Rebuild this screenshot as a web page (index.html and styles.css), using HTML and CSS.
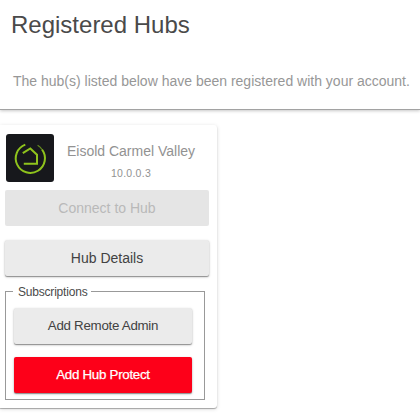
FILE: index.html
```html
<!DOCTYPE html>
<html lang="en">
<head>
<meta charset="utf-8">
<title>Registered Hubs</title>
<link rel="stylesheet" href="styles.css">
</head>
<body>
<header class="intro">
  <h1>Registered Hubs</h1>
  <p>The hub(s) listed below have been registered with your account.</p>
</header>
<main class="card">
  <div class="hub">
    <svg class="logo" viewBox="0 0 48 48" width="48" height="48">
      <rect width="48" height="48" rx="3" fill="#17181c"/>
      <g fill="none" stroke="#8fc31c" stroke-width="2">
        <path d="M19.3 10.6A14.6 14.6 0 1 0 36 15.5"/>
        <path d="M36 15.5Q34.4 12.8 31.6 11.2" stroke-width="1.3" stroke="#648a20"/>
        <path d="M16.8 19.2L24.3 14.5L31 20.8V29.7H17.8"/>
      </g>
    </svg>
    <div class="info">
      <div class="name">Eisold Carmel Valley</div>
      <div class="ip">10.0.0.3</div>
    </div>
  </div>
  <button class="btn connect" disabled>Connect to Hub</button>
  <button class="btn details">Hub Details</button>
  <fieldset class="subs">
    <legend>Subscriptions</legend>
    <button class="btn small">Add Remote Admin</button>
    <button class="btn small protect">Add Hub Protect</button>
  </fieldset>
</main>
</body>
</html>
```
FILE: styles.css
```css
* { box-sizing: border-box; }
body {
  margin: 0;
  height: 415px;
  overflow: hidden;
  background: #fff;
  color: #4a4a4a;
  font-family: "Liberation Sans", Arial, sans-serif;
}
.intro {
  height: 110px;
  padding: 9px 0 0 11px;
  border-bottom: 1px solid #a2a2a2;
  box-shadow: 0 1px 3px rgba(0, 0, 0, .22);
}
h1 {
  margin: 0;
  font-size: 24px;
  line-height: 32px;
  font-weight: 400;
}
p {
  margin: 30px 0 0 2px;
  font-size: 14px;
  line-height: 20px;
  white-space: nowrap;
  color: #979797;
}
.card {
  width: 217px;
  height: 283px;
  margin-top: 15px;
  padding: 9px 8px 0 5px;
  border-radius: 0 3px 3px 0;
  box-shadow: 0 1px 1px rgba(0, 0, 0, .3), 0 1px 4px rgba(0, 0, 0, .14);
}
.hub {
  display: flex;
  height: 56px;
  padding-left: 1px;
}
.logo { flex: none; }
.info {
  flex: 1;
  padding: 7px 1px 0 0;
  text-align: center;
  color: #929292;
}
.name {
  font-size: 14px;
  line-height: 20px;
  white-space: nowrap;
}
.ip {
  margin-top: 5px;
  font-size: 10.5px;
  line-height: 14px;
  letter-spacing: .25px;
}
.btn {
  display: block;
  width: 204px;
  height: 36px;
  margin: 0;
  padding: 0;
  border: 0;
  border-radius: 2px;
  background: #ebebeb;
  color: #424242;
  font: 14px/36px "Liberation Sans", Arial, sans-serif;
  box-shadow: 0 1px 1px rgba(0, 0, 0, .35), 0 1px 3px rgba(0, 0, 0, .2);
}
.connect {
  background: #e5e5e5;
  color: #b9b9b9;
  box-shadow: none;
}
.details { margin-top: 14px; }
.subs {
  width: 200px;
  height: 116px;
  margin: 8px 0 0;
  padding: 9px 0 0 8px;
  border: 1px solid #999;
}
legend {
  margin-left: -1px;
  padding: 2px 4px 0 5px;
  font-size: 12px;
  line-height: 13px;
  letter-spacing: -.2px;
}
.small {
  width: 178px;
  font-size: 13.333px;
  letter-spacing: -.28px;
}
.protect {
  margin-top: 13px;
  background: #fd0019;
  color: #fff;
  -webkit-text-stroke: .25px #fff;
}
```
